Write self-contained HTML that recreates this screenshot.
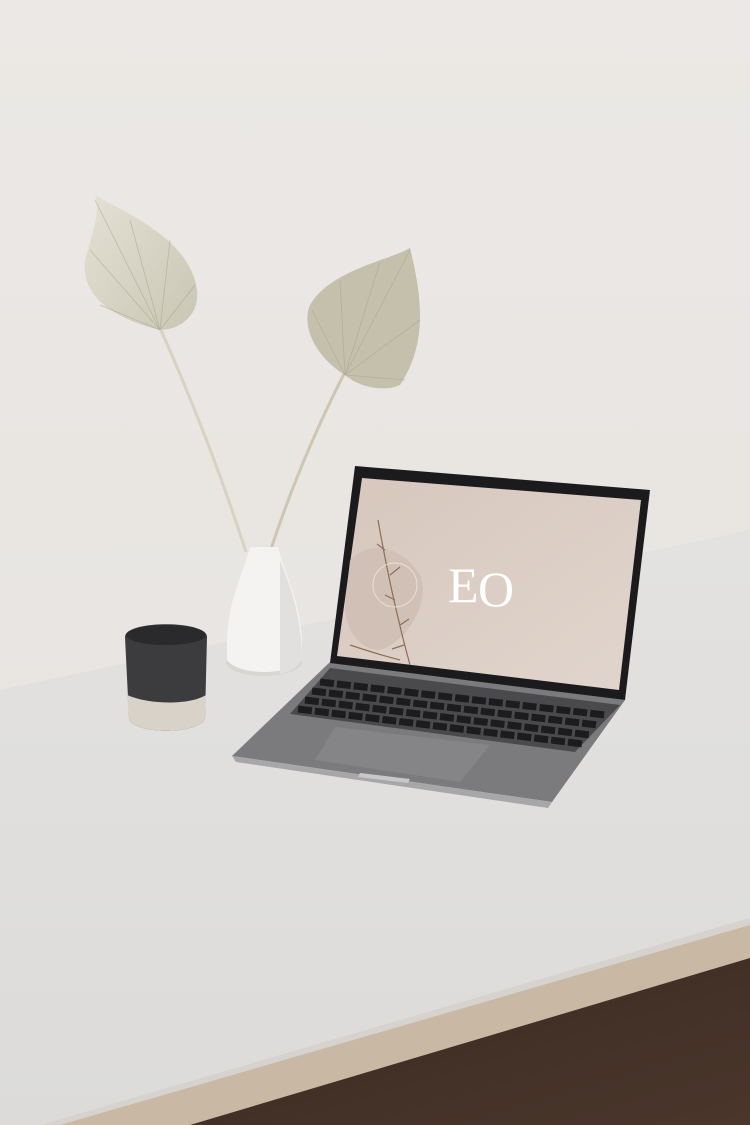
<!DOCTYPE html>
<html><head><meta charset="utf-8"><style>
html,body{margin:0;padding:0;width:750px;height:1125px;overflow:hidden;background:#ebe8e5}
svg{display:block}
</style></head><body>
<svg width="750" height="1125" viewBox="0 0 750 1125" xmlns="http://www.w3.org/2000/svg">
<defs>
<linearGradient id="wall" x1="0" y1="0" x2="0" y2="1"><stop offset="0" stop-color="#ebe8e5"/><stop offset="1" stop-color="#e6e3df"/></linearGradient>
<linearGradient id="table" x1="0" y1="0" x2="0" y2="1"><stop offset="0" stop-color="#e3e2e0"/><stop offset="1" stop-color="#dcdbd9"/></linearGradient>
<linearGradient id="scr" x1="0" y1="0" x2="1" y2="1"><stop offset="0" stop-color="#d7c7bd"/><stop offset="1" stop-color="#e0d5cd"/></linearGradient>
<linearGradient id="floor" x1="0" y1="0" x2="1" y2="1"><stop offset="0" stop-color="#3a2a22"/><stop offset="1" stop-color="#4a362b"/></linearGradient>
<linearGradient id="leaf" x1="0" y1="0" x2="1" y2="1"><stop offset="0" stop-color="#e4e1d5"/><stop offset="1" stop-color="#c9c6b4"/></linearGradient>
</defs>
<rect width="750" height="1125" fill="url(#wall)"/>
<polygon points="180,1125 750,955 750,1125" fill="url(#floor)"/>
<polygon points="40,1125 750,918 750,958 190,1125" fill="#c9b8a4"/>
<polygon points="40,1125 750,918 750,925 60,1125" fill="#d6d3cf"/>
<polygon points="0,690 750,530 750,918 40,1125 0,1125" fill="url(#table)"/>
<path d="M160,328 Q210,440 246,552" stroke="#d9d2c0" stroke-width="3" fill="none"/>
<path d="M345,372 Q300,460 270,552" stroke="#cfc6b2" stroke-width="3" fill="none"/>
<path d="M160,330 C120,320 80,300 85,260 C95,225 100,210 95,195 C130,215 190,240 197,290 C200,315 180,330 160,330 Z" fill="url(#leaf)"/>
<path d="M345,375 C320,360 300,330 310,305 C330,270 390,260 410,248 C420,290 430,340 400,385 C385,392 360,388 345,375 Z" fill="#c4c0ab"/>
<g stroke="#a8a48f" stroke-width="0.8" opacity="0.6">
<line x1="160" y1="330" x2="95" y2="200"/><line x1="160" y1="330" x2="90" y2="250"/><line x1="160" y1="330" x2="130" y2="220"/><line x1="160" y1="330" x2="170" y2="240"/><line x1="160" y1="330" x2="195" y2="285"/><line x1="160" y1="330" x2="100" y2="305"/>
<line x1="345" y1="375" x2="410" y2="250"/><line x1="345" y1="375" x2="380" y2="262"/><line x1="345" y1="375" x2="340" y2="280"/><line x1="345" y1="375" x2="312" y2="310"/><line x1="345" y1="375" x2="420" y2="320"/><line x1="345" y1="375" x2="405" y2="380"/>
</g>
<ellipse cx="264" cy="662" rx="38" ry="14" fill="#cfcecc" opacity="0.6"/>
<path d="M250,547 L278,547 C285,575 300,600 302,640 L302,660 C290,676 238,676 227,660 L227,640 C228,600 243,575 250,547 Z" fill="#f4f3f1"/>
<path d="M280,560 C292,590 302,620 302,660 C296,668 290,672 280,674 Z" fill="#e1e0de"/>
<path d="M125,637 C125,620 207,620 207,637 L205,718 C200,735 132,735 129,718 Z" fill="#3c3c3e"/>
<path d="M127,695 C150,705 190,705 206,695 L205,718 C200,735 132,735 129,718 Z" fill="#d8d2c8"/>
<ellipse cx="166" cy="635" rx="40" ry="10" fill="#2a2a2c"/>
<polygon points="330,662 625,700 552,802 232,756" fill="#7b7b7e"/>
<polygon points="232,756 552,802 548,808 236,762" fill="#a7a7aa"/>
<polygon points="330,668 620,705 575,752 290,714" fill="#4a4a4d"/>
<g stroke="#1c1c1e" stroke-width="7" stroke-dasharray="14 3">
<line x1="320" y1="682" x2="605" y2="715"/>
<line x1="312" y1="691" x2="598" y2="725"/>
<line x1="305" y1="700" x2="590" y2="735"/>
<line x1="298" y1="709" x2="583" y2="744"/>
</g>
<polygon points="335,727 490,745 460,782 315,760" fill="#858588"/>
<polygon points="360,773 410,779 408,783 358,777" fill="#c8c8ca"/>
<polygon points="355,466 650,490 625,700 330,663" fill="#1b1b1d"/>
<polygon points="362,478 641,500 619,690 337,656" fill="url(#scr)"/>
<path d="M350,560 C370,540 400,545 420,575 C430,600 410,640 380,650 C360,650 345,630 345,605 Z" fill="#cdbdb1" opacity="0.8"/>
<g stroke="#8c6f58" stroke-width="1.2" fill="none">
<path d="M378,520 C385,560 395,610 410,665"/>
<path d="M385,550 l-8,-6 M390,575 l10,-8 M395,600 l-10,-5 M400,625 l9,-6 M404,645 l-12,4"/>
<path d="M350,645 C365,650 380,655 400,660"/>
</g>
<circle cx="395" cy="585" r="22" fill="none" stroke="#eee6e0" stroke-width="1" opacity="0.8"/>
<text x="448" y="602" font-family="Liberation Serif, serif" font-size="50" fill="#ffffff">E</text>
<text x="478" y="606" font-family="Liberation Serif, serif" font-size="50" fill="#ffffff">O</text>
</svg>
</body></html>
